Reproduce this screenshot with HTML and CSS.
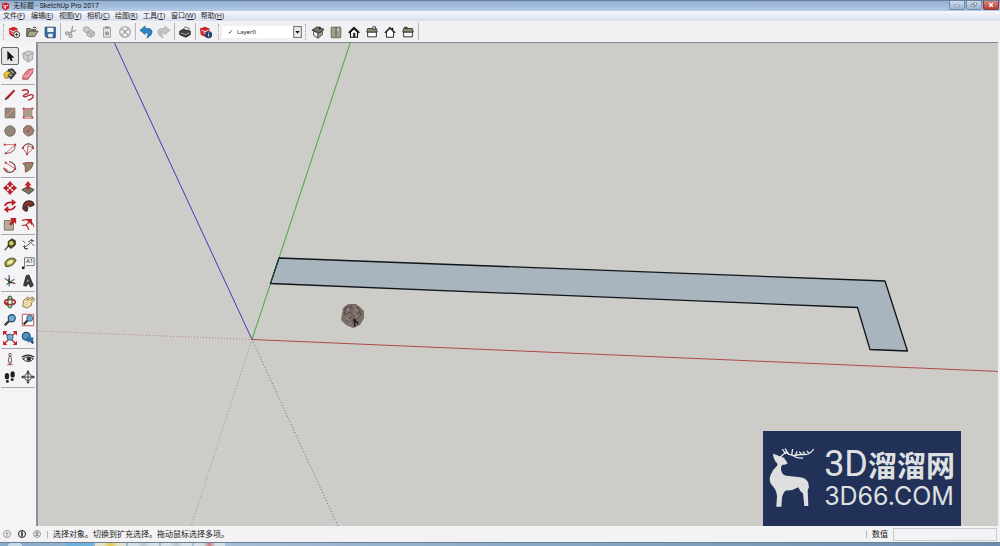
FILE: index.html
```html
<!DOCTYPE html>
<html lang="zh-CN">
<head>
<meta charset="utf-8">
<title>无标题 - SketchUp Pro 2017</title>
<link rel="stylesheet" href="styles.css">
</head>
<body>
<header class="titlebar">
  <svg class="app-icon" viewBox="0 0 10 10"><path fill="#d3222a" d="M1 2 5 .5 9 2v5L5 9.500 1 7z"/><path stroke="#fff" fill="none" d="M2 3.500 5 4.500 8 3.500M3 6l2 1V4.500"/></svg>
  <h1 class="title">无标题 - SketchUp Pro 2017</h1>
  <div class="window-buttons">
    <button class="win" aria-label="最小化"><svg viewBox="0 0 16 8"><path d="M5 4h6v2H5z" fill="#fff" stroke="#56667c" stroke-width=".6"/></svg></button>
    <button class="win" aria-label="还原"><svg viewBox="0 0 16 8"><path d="M7 1.500h4v3H7zM5 3h4v3H5z" fill="#fff" stroke="#56667c" stroke-width=".7"/></svg></button>
    <button class="win close" aria-label="关闭"><svg viewBox="0 0 16 8"><path d="m6 2 4 4m0-4L6 6" stroke="#fff" stroke-width="1.500"/></svg></button>
  </div>
</header>
<nav class="menubar">
  <button>文件(<u>F</u>)</button><button>编辑(<u>E</u>)</button><button>视图(<u>V</u>)</button><button>相机(<u>C</u>)</button><button>绘图(<u>R</u>)</button><button>工具(<u>T</u>)</button><button>窗口(<u>W</u>)</button><button>帮助(<u>H</u>)</button>
</nav>
<div class="toolbar">
  <span class="grip"></span>
  <button class="tool" aria-label="新建"><svg viewBox="0 0 16 16"><path fill="#d3222a" d="m2 4 6-2 4 2v8l-4 2-5-3z"/><path d="m3 6 4 1.500L11 6M5 9l3 1V7.500" fill="none" stroke="#fff"/><circle cx="11" cy="11" r="3.500" fill="#fff" stroke="#222"/><path d="M9 11h4m-2-2v4" stroke="#222"/></svg></button>
  <button class="tool" aria-label="打开"><svg viewBox="0 0 16 16"><path d="M2 13V4h4l1 1h5v3" fill="#8e8c72" stroke="#4a4b3c"/><path d="m2 13 3-6h10l-4 6z" fill="#aaa98d" stroke="#4a4b3c"/><path d="M9 3q3-2 4 1" fill="none" stroke="#333"/></svg></button>
  <button class="tool" aria-label="保存"><svg viewBox="0 0 16 16"><path d="M2.500 2.500h11.500v12h-9.500l-2-2z" fill="#3d719f" stroke="#193f66"/><path d="M5 3h7v5H5zM6 10h5v4H6z" fill="#eef3f7"/></svg></button>
  <span class="sep"></span>
  <button class="tool" aria-label="剪切"><svg viewBox="0 0 16 16" fill="none" stroke="#9a9a9a" stroke-width="1.500"><path d="M10 1 8 10M14 6 5 9"/><circle cx="3.500" cy="9.500" r="1.700"/><circle cx="7.500" cy="12.500" r="1.700"/></svg></button>
  <button class="tool" aria-label="复制"><svg viewBox="0 0 16 16" fill="#ccc" stroke="#999"><path d="m2 3 4-1 3 2v4L5 9 2 7z"/><path d="m6 8 5-2 3 2v4l-4 2-4-2z"/><path d="m6 8 4 2 4-2m-4 2v4"/></svg></button>
  <button class="tool" aria-label="粘贴"><svg viewBox="0 0 16 16" fill="#e4e4e4" stroke="#999"><path d="M4 3h8v11H4z"/><path fill="#999" d="M6 2h4v2H6zM6.500 8h3v3h-3z"/></svg></button>
  <button class="tool" aria-label="删除"><svg viewBox="0 0 16 16" fill="none" stroke="#929292" stroke-width="1.200"><circle cx="8" cy="8" r="6"/><path d="m4.500 4.500 7 7m0-7-7 7"/></svg></button>
  <span class="sep"></span>
  <button class="tool" aria-label="撤销"><svg viewBox="0 0 16 16"><path fill="#2d83bd" stroke="#1b5787" stroke-width=".6" d="m1 6 6-5v3q8-1 8 4 0 4-6 7 3-7-2-6v2z"/></svg></button>
  <button class="tool" aria-label="重做"><svg viewBox="0 0 16 16"><path fill="#c2c2c2" stroke="#a2a2a2" stroke-width=".6" d="M15 6 9 1v3Q1 3 1 8q0 4 6 7-3-7 2-6v2z"/></svg></button>
  <span class="sep"></span>
  <button class="tool" aria-label="打印"><svg viewBox="0 0 16 16"><path d="m5 6 3-4 5 2-2 4z" fill="#eee" stroke="#666"/><path d="m2 7 4-2 8 2v4l-5 3-7-3z" fill="#3f4244" stroke="#222"/><path d="m3 9 6 2 4-2" stroke="#aaa" fill="none"/></svg></button>
  <span class="sep"></span>
  <button class="tool" aria-label="模型信息"><svg viewBox="0 0 16 16"><path fill="#d3222a" d="m1 4 6-2 5 2v8l-4 2-6-3z"/><path d="m3 6 4 1.500L11 6M5 9l3 1V7.500" fill="none" stroke="#fff"/><circle cx="11" cy="11" r="4" fill="#1e416f"/><path d="M11 8.500v1m0 .8v3" stroke="#fff"/></svg></button>
  <span class="grip grip-mid"></span>
  <div class="layer">
    <span class="tick">✓</span>
    <select class="layer-select" aria-label="图层"><option>Layer0</option></select>
    <svg class="layer-arrow" viewBox="0 0 8 11"><path d="M.5.5h7v10h-7z" fill="#e9e9e9" stroke="#777"/><path d="M2 4.500h4L4 7z" fill="#111"/></svg>
  </div>
  <span class="grip grip-mid"></span>
  <button class="tool" aria-label="等轴视图"><svg viewBox="0 0 16 16"><path d="m3 7 5 2v6l-5-3z" fill="#eee" stroke="#444"/><path d="m8 9 5-2v4l-5 4z" fill="#a5a28f" stroke="#444"/><path d="m1 6 6-4 8 3-5 4-3-1-2-1z" fill="#77766a" stroke="#333"/><path d="M10 2v3" stroke="#222" stroke-width="2"/></svg></button>
  <button class="tool" aria-label="俯视图"><svg viewBox="0 0 16 16"><path d="M2.500 2.500h11v12h-11z" fill="#a19e8b" stroke="#64635a"/><path d="M8 2v12" stroke="#555"/><path d="M9.500 4h2v3h-2z" fill="#ccc9b9"/></svg></button>
  <button class="tool" aria-label="前视图"><svg viewBox="0 0 16 16"><path d="M4 8v6h8V8L8 4z" fill="#fff" stroke="#111" stroke-width="1.300"/><path d="m2 9 6-6 6 6" fill="none" stroke="#111" stroke-width="1.800"/><path d="M7 9h2.500v5H7z" fill="#222"/></svg></button>
  <button class="tool" aria-label="右视图"><svg viewBox="0 0 16 16"><path d="M3 8h10v5.500H3z" fill="#fff" stroke="#222"/><path d="M3 4h10l1 4H2z" fill="#8d8a78" stroke="#333"/><path d="M9 2h3v3H9z" fill="#eee" stroke="#333"/></svg></button>
  <button class="tool" aria-label="后视图"><svg viewBox="0 0 16 16"><path d="M4 8v6h8V8L8 4z" fill="#fff" stroke="#111"/><path d="m2 9 6-6 6 6M11 3v3" fill="none" stroke="#111" stroke-width="1.300"/></svg></button>
  <button class="tool" aria-label="左视图"><svg viewBox="0 0 16 16"><path d="M3 8h10v5.500H3z" fill="#fff" stroke="#222"/><path d="M3 4h10l1 4H2zM4 2.500h3V4H4z" fill="#8d8a78" stroke="#333"/></svg></button>
  <span class="sep"></span>
</div>
<main class="workspace">
  <aside class="palette">
    <div class="group">
      <button class="tool active" aria-label="选择"><svg viewBox="0 0 16 16"><path d="M5 2v11l2.500-2.500L9 14l2-1-1.500-3H13z" fill="#111"/></svg></button>
      <button class="tool" aria-label="制作组件"><svg viewBox="0 0 16 16" fill="#cfcfcf" stroke="#9b9b9b"><path d="m2 5 7-3 5 2-1 8-5 3-5-4z"/><path d="m3 5 5 3v6m0-6 6-4" fill="none"/></svg></button>
      <button class="tool" aria-label="材质"><svg viewBox="0 0 16 16"><path d="m6 3 5-1 4 5-6 7-4-4z" fill="#4b4a43" stroke="#222"/><path d="M1 8q2-4 6-3l3 3q-3-1-4 1l-1 4q-4 1-4-5z" fill="#e5c72f" stroke="#67571b" stroke-width=".7"/><path d="m9 4 3 3m-5 3 3-1" stroke="#fff"/></svg></button>
      <button class="tool" aria-label="擦除"><svg viewBox="0 0 16 16"><path d="m2 10 6-7 6-1-1 5-5 7H2z" fill="#e58390" stroke="#aa4b5a"/><path d="m2 10 6 .5 6-8" fill="none" stroke="#f7bdc5"/></svg></button>
    </div>
    <div class="group">
      <button class="tool" aria-label="直线"><svg viewBox="0 0 16 16"><path d="m2 14 2-4 8-8 2 1-8 9z" fill="#981e22"/><path d="m2 14 1-3 2 1z" fill="#222"/><path d="m5 10 7-7" stroke="#d34d4d"/></svg></button>
      <button class="tool" aria-label="手绘线"><svg viewBox="0 0 16 16"><path d="M1 3q5-2 7 0 2 3-3 4-5 3 0 3l5-2q4-1 4 1 0 3-6 5" fill="none" stroke="#ac292e" stroke-width="1.500"/></svg></button>
      <button class="tool" aria-label="矩形"><svg viewBox="0 0 16 16"><path d="M2.500 2.500h11v11h-11z" fill="#918776" stroke="#756e62"/><path d="M3 13 13 3" stroke="#ee8d84" stroke-width="1.500"/></svg></button>
      <button class="tool" aria-label="旋转矩形"><svg viewBox="0 0 16 16"><path d="M3 3h10v10H3z" fill="#ab9c8b"/><path d="M2 3h12M3 2v12h11" fill="none" stroke="#d76665"/><path d="M2 2h2v2H2zm10 0h2v2h-2zM2 12h2v2H2zm10 0h2v2h-2z" fill="#b73638"/></svg></button>
      <button class="tool" aria-label="圆"><svg viewBox="0 0 16 16"><circle cx="8" cy="8" r="6" fill="#918776" stroke="#6e695e"/><path d="M8 8h5" stroke="#d4726a"/></svg></button>
      <button class="tool" aria-label="多边形"><svg viewBox="0 0 16 16"><path d="m6 2 5 0 4 5-2 5-5 2-5-4V5z" fill="#9b8170" stroke="#7a6659"/><path d="m8 8 4-4" stroke="#cd4f4f"/><circle cx="8" cy="8" r="1" fill="#b82f32"/></svg></button>
      <button class="tool" aria-label="圆弧"><svg viewBox="0 0 16 16" fill="none" stroke="#c56565"><path d="M2 3h12L3 13"/><path d="M14 3q0 10-11 10" stroke="#754141"/><path d="M1 2h2v2H1zm12 0h2v2h-2zM2 12h2v2H2z" fill="#b92a31" stroke="none"/></svg></button>
      <button class="tool" aria-label="两点圆弧"><svg viewBox="0 0 16 16" fill="none" stroke="#b94c4c"><path d="M2 7q2-5 7-5 5 1 5 5" stroke="#743c3c" stroke-width="1.300"/><path d="m2 7 5 7 7-7M7 14 8 4l6 3"/><path d="M1 6h2v2H1zm12 0h2v2h-2zM6 13h2v2H6z" fill="#b92a31" stroke="none"/></svg></button>
      <button class="tool" aria-label="三点圆弧"><svg viewBox="0 0 16 16" fill="none" stroke="#743c3c"><path d="M7 2q7 1 7 7-2 6-8 5-4-1-5-5" stroke-width="1.300"/><path d="m3 3 11 7M1 9l5 3" stroke="#c74949"/><path d="M2 2h2v2H2zm11 7h2v2h-2z" fill="#b92a31" stroke="none"/></svg></button>
      <button class="tool" aria-label="扇形"><svg viewBox="0 0 16 16"><path d="M2 4q6-2 12-1-1 8-9 11V8Q4 5 2 4z" fill="#94806c" stroke="#6b5a4d"/><path d="M2 4 12 3M5 13V8" stroke="#c85353"/></svg></button>
    </div>
    <div class="group">
      <button class="tool" aria-label="移动"><svg viewBox="0 0 16 16" fill="#bd2228"><path d="m8 0 4 4.500H9.500v2h-3v-2H4zm0 16 4-4.500H9.500v-2h-3v2H4zM0 8l4.500-4v2.500h2v3h-2V12zm16 0-4.500-4v2.500h-2v3h2V12z"/></svg></button>
      <button class="tool" aria-label="推拉"><svg viewBox="0 0 16 16"><path d="m1 10 7-4 7 4-6 5z" fill="#797861" stroke="#49483b"/><path d="m8 0 4 5H9.500v5h-3V5H4z" fill="#c3242b"/></svg></button>
      <button class="tool" aria-label="旋转"><svg viewBox="0 0 16 16" fill="none" stroke="#b82027" stroke-width="2"><path d="M2 8q2-5 9-4m3 4q-2 5-9 4"/><path d="m10 0 5 4-5 4zM6 8l-5 4 5 4z" fill="#b82027" stroke="none"/></svg></button>
      <button class="tool" aria-label="路径跟随"><svg viewBox="0 0 16 16"><path d="M2 11Q2 2 9 2q6 0 6 5l-5 2-2-2q-2 1 0 3l-1 4q-4 0-5-3z" fill="#632e2a" stroke="#3d2521"/><path d="M4 8q2-4 8-3" stroke="#c23b3b" fill="none"/></svg></button>
      <button class="tool" aria-label="缩放"><svg viewBox="0 0 16 16"><path d="M1.500 4h10.500v11H1.500z" fill="#b5ad9a" stroke="#716b5e"/><path d="M8 1h7v7l-2-2-4 4-2-2 3-4z" fill="#bd2228"/></svg></button>
      <button class="tool" aria-label="偏移"><svg viewBox="0 0 16 16" fill="none" stroke="#b52a30" stroke-width="1.300"><path d="M1 4q9-4 14 7M1 10q6-3 8 5"/><path d="m5 10 6-6"/><path d="M7 3h5v5z" fill="#b52a30"/></svg></button>
    </div>
    <div class="group">
      <button class="tool" aria-label="卷尺"><svg viewBox="0 0 16 16"><path d="m2 14 5-6" stroke="#555" stroke-width="1.500"/><path d="m6 4 4-3 4 2v5l-5 4-3-3z" fill="#504c2b" stroke="#222"/><circle cx="9.500" cy="6" r="2.500" fill="#d9ce48"/></svg></button>
      <button class="tool" aria-label="尺寸"><svg viewBox="0 0 16 16" fill="none" stroke="#444"><path d="m2 3 3 3m3-1 5-4M2 9l5 5m5-8 3 3M4 11l10-8m-3 0 4 0M4 8v4h4"/></svg></button>
      <button class="tool" aria-label="量角器"><svg viewBox="0 0 16 16"><path d="M3 12Q0 6 7 3q6-2 8 2-4 8-12 7z" fill="#9c973e" stroke="#444428"/><path d="M5 10q-1-3 2-5 4-1 5 1-2 4-7 4z" fill="#ede9a0"/></svg></button>
      <button class="tool text-tool" aria-label="文字"><svg viewBox="0 0 16 16" fill="none" stroke="#666"><path d="M4 2h11v9H6M4 2v9m-2 3 3-3"/><path d="M1 12h3v3H1z" fill="#222" stroke="none"/></svg><span>A1</span></button>
      <button class="tool" aria-label="轴"><svg viewBox="0 0 16 16" fill="none" stroke-width="1.300"><path d="M7 1v13" stroke="#3c5b9c"/><path d="m2 5 6 4 6 2" stroke="#883a3a"/><path d="m4 12 9-6" stroke="#3a8053"/><path d="M7 5v5h3" stroke="#222"/></svg></button>
      <button class="tool" aria-label="三维文字"><svg viewBox="0 0 16 16"><path d="m3 13 3-11 3-1 5 12-3 2-2-4-2 1-1 2z" fill="#404345" stroke="#252728"/><path d="m7.500 6-1 3 2.500-1z" fill="#aaa"/></svg></button>
    </div>
    <div class="group">
      <button class="tool" aria-label="环绕观察"><svg viewBox="0 0 16 16" fill="none"><ellipse cx="8" cy="8" rx="6" ry="3" stroke="#b62b31" stroke-width="2"/><ellipse cx="8" cy="8" rx="2.500" ry="6.500" stroke="#347847" stroke-width="1.600"/><path d="m1 9 5-1-1 5z" fill="#b62b31"/></svg></button>
      <button class="tool" aria-label="平移"><svg viewBox="0 0 16 16"><path d="m2 13 1-7 5-4 1 1-2 3 6-4 1 1-3 3 4-2v2l-3 3v3l-5 3z" fill="#ecd9a6" stroke="#8b7752"/></svg></button>
      <button class="tool" aria-label="缩放视图"><svg viewBox="0 0 16 16"><path d="m2 14 5-5" stroke="#3a3432" stroke-width="2.500"/><circle cx="10" cy="6" r="4" fill="#75acd0" stroke="#28577a" stroke-width="1.500"/></svg></button>
      <button class="tool" aria-label="缩放窗口"><svg viewBox="0 0 16 16"><path d="M1.500 1.500h13v13h-13z" fill="#fff" stroke="#ba4146"/><path d="m3 13 5-5" stroke="#333" stroke-width="2.500"/><circle cx="10" cy="6" r="3.500" fill="#75acd0" stroke="#28577a"/></svg></button>
      <button class="tool" aria-label="充满视窗"><svg viewBox="0 0 16 16"><path d="m2 2 12 12m0-12L2 14" stroke="#bd272e" stroke-width="1.500"/><path d="M0 0h5L0 5zm16 0v5l-5-5zM0 16v-5l5 5zm16 0h-5l5-5z" fill="#bd272e"/><circle cx="8" cy="7" r="3.500" fill="#75acd0" stroke="#28577a"/></svg></button>
      <button class="tool" aria-label="上一视图"><svg viewBox="0 0 16 16"><path d="m9 9 5 5" stroke="#263e58" stroke-width="2.500"/><circle cx="6" cy="6" r="4.500" fill="#5795c1" stroke="#204d73" stroke-width="1.300"/><path d="m5 9 4-4v2h5v5H9v2z" fill="#2d72a5"/></svg></button>
    </div>
    <div class="group">
      <button class="tool" aria-label="定位相机"><svg viewBox="0 0 16 16" fill="#f5eeee" stroke="#64494a"><path d="M7 5h2l1 6H9v3H7v-3H6z"/><circle cx="8" cy="3" r="1.500"/><path d="M5 14.500h6" stroke="#c63c40"/></svg></button>
      <button class="tool" aria-label="绕轴观察"><svg viewBox="0 0 16 16"><path d="M2 8q6-5 12 0-5 6-12 0z" fill="#ddd" stroke="#222"/><circle cx="9" cy="8" r="2.300" fill="#222"/><path d="M1 6q7-5 14 0" stroke="#222" stroke-width="1.500" fill="none"/></svg></button>
      <button class="tool" aria-label="漫游"><svg viewBox="0 0 16 16" fill="#222"><ellipse cx="4.500" cy="7" rx="2.500" ry="3.700"/><ellipse cx="5" cy="13" rx="1.700" ry="1.700"/><ellipse cx="11" cy="5" rx="2.500" ry="3.700"/><ellipse cx="10.500" cy="11" rx="1.700" ry="1.700"/></svg></button>
      <button class="tool" aria-label="剖切面"><svg viewBox="0 0 16 16" fill="none" stroke="#333"><circle cx="8" cy="8" r="4"/><path d="M1 8h14M8 2v12"/><path d="m8 0 2 3H6zm0 16 2-3H6zM0 8l3-2v4zm16 0-3-2v4z" fill="#333" stroke="none"/></svg></button>
    </div>
  </aside>
  <section class="canvas" aria-label="模型视图">
    <svg class="scene" viewBox="38 43 960 483" preserveAspectRatio="xMinYMin slice" fill="none">
      <path d="M252 339.500 38 331" stroke="#b68484" stroke-dasharray="1 2"/>
      <path d="M252 339.500 191 526" stroke="#6fae82" stroke-dasharray="1 2"/>
      <path d="M252 339.500 338 526" stroke="#6666ad" stroke-dasharray="1 2"/>
      <path d="M252 339.500 114 42" stroke="#3c3cb8"/>
      <path d="M252 339.500 350.500 42" stroke="#3fab43"/>
      <path d="M252 339.500 1000 371.500" stroke="#b2484c"/>
      <path d="m279 258 606 23 22.500 70-37.500-1.500-12.500-42L270.500 283.500z" fill="#a8b5be" stroke="#101418" stroke-width="1.300" stroke-linejoin="round"/>
      <path d="M279 258l-8.500 25.500" stroke="#1b4a2b"/>
      <path d="m343 308 5-4h8l4 3 4 4v7l-4 7-7 3-7-3-5-5z" fill="#7b6d68"/>
      <path d="m344 310 5-4 4 3 6-2m-15 8 6-3 4 4 8-5m-16 10 5-4 5 3 6-6m-13 9 4-2 6 1m-13-16-2 9m8-11-2 8m8-5 3 8" stroke="#5a4d49"/>
      <path d="m347 309 3 2m4-3 4 3m-12 7 3 2m5-7 4 4m-9 7 3-2" stroke="#a79b93"/>
      <path d="m354 319 1 8m-1-8 4 5" stroke="#171313" stroke-width="1.300"/>
    </svg>
    <div class="brand">
      <svg class="deer" viewBox="0 0 162 204"><path fill="#dedfdf" d="M24 32q10 2 18 7l15 5 11 17q-7 6-16 4-7 8-2 22 3 9 15 11l40 5q17 2 24 14l3 15-4 10 2 47h-12l-4-38q-10-6-14-18-18 11-36 9-11 7-13 24l-2 25H34l2-31q-1-18-13-31-14-15-6-34 4-13 18-25 5-4 1-10-10-8-12-26z"/><g fill="none" stroke="#e5e6e6" stroke-width="4"><path d="M46 42 62 28q16 13 34 8l16-2q20 5 34-16M62 33 52 18M72 35 60 17m20 19 3-18m9 19 4-12m18 11-12-10m20 10-8-10m18 6-6-8M80 36q15 11 34 9"/></g></svg>
      <div class="brand-text">
        <div class="brand-name"><span class="brand-latin">3D</span><span class="brand-cjk">溜溜网</span></div>
        <div class="brand-site">3D66.COM</div>
      </div>
    </div>
  </section>
</main>
<footer class="statusbar">
  <svg class="status-icon" viewBox="0 0 10 10" fill="none" stroke="#999"><circle cx="5" cy="5" r="3.500"/><path d="M5 7.500v-4M3.500 5 5 3.500 6.500 5"/></svg>
  <svg class="status-icon" viewBox="0 0 10 10" fill="none" stroke="#222"><circle cx="5" cy="5" r="3.500"/><path d="M5 2.500v5" stroke-width="1.500"/></svg>
  <svg class="status-icon" viewBox="0 0 10 10" fill="none" stroke="#999"><circle cx="5" cy="5" r="3.500"/><path d="M3 7q2-3 4 0M4 3h2v2H4z" fill="#999"/></svg>
  <span class="status-sep"></span>
  <p class="hint">选择对象。切换到扩充选择。拖动鼠标选择多项。</p>
  <span class="status-sep"></span>
  <label class="value-label" for="value">数值</label>
  <input class="value" id="value" type="text">
</footer>
<div class="taskbar"><span class="orb"></span><span class="task blue"></span><span class="task yellow"></span><span class="task"></span><span class="task"></span><span class="task red"></span></div>
</body>
</html>
```
FILE: styles.css
```css
* { box-sizing: border-box; }
body {
  margin: 0;
  height: 100vh;
  display: flex;
  flex-direction: column;
  overflow: hidden;
  background: #f1f0f2;
  color: #1c1c22;
  font-family: "Noto Sans", "Noto Sans CJK SC", sans-serif;
  font-size: 7px;
}
button {
  margin: 0;
  padding: 0;
  border: 0;
  background: none;
  color: inherit;
  font: inherit;
}
svg { display: block; }

.titlebar {
  flex: none;
  height: 11px;
  display: flex;
  align-items: center;
  gap: 3px;
  padding-left: 1px;
  border-top: 1px solid #66809b;
  background: linear-gradient(#93afd2, #b6cce7);
}
.app-icon { width: 9px; height: 9px; }
.title {
  flex: 1;
  margin: 0;
  font-family: Roboto, "Noto Sans CJK SC", sans-serif;
  font-size: 7px;
  line-height: 10px;
  font-weight: 400;
}
.window-buttons {
  display: flex;
  align-self: flex-start;
  gap: 1px;
  padding-right: 1px;
}
.win {
  width: 16px;
  height: 9px;
  border: 1px solid #7389a6;
  border-top: 0;
  border-radius: 0 0 2px 2px;
  background: linear-gradient(#cddbec, #9eb6d3);
}
.win svg { width: 100%; height: 100%; }
.close { background: linear-gradient(#d98a82, #b93f35); border-color: #7c3c42; }

.menubar {
  flex: none;
  height: 10px;
  display: flex;
  gap: 5px;
  padding-left: 3px;
  background: linear-gradient(#f5f7fc, #d9deee);
  line-height: 10px;
}
.menubar button { min-width: 23px; text-align: left; white-space: nowrap; }

.toolbar {
  flex: none;
  height: 21px;
  display: flex;
  align-items: center;
  padding-left: 2px;
  background: #f1f0f2;
}
.tool {
  flex: none;
  width: 18px;
  height: 18px;
  padding: 2px;
  display: flex;
  align-items: center;
  justify-content: center;
}
.tool svg { width: 14px; height: 14px; }
.sep { width: 1px; height: 17px; margin: 0 1px; background: #b5b5b8; }
.grip { width: 1px; height: 16px; margin: 0 1px; border-left: 1px dotted #a5a5a8; }
.grip-mid { margin: 0 3px; }
.layer {
  position: relative;
  display: flex;
  align-items: center;
  width: 80px;
  height: 12px;
  padding-left: 6px;
  background: #fff;
  line-height: 12px;
}
.tick { font-size: 6px; font-family: "DejaVu Sans", sans-serif; }
.layer-select {
  flex: 1;
  min-width: 0;
  height: 12px;
  padding: 0 0 0 4px;
  border: 0;
  appearance: none;
  background: transparent;
  color: #222;
  font-family: inherit;
  font-size: 6px;
}
.layer-arrow {
  position: absolute;
  top: 0;
  right: 0;
  width: 9px;
  height: 12px;
  pointer-events: none;
}

.workspace { flex: 1; min-height: 0; display: flex; }
.palette {
  flex: none;
  width: 38px;
  padding: 5px 1px 0;
  border-right: 2px solid #8d8f92;
  background: #f4f3f6;
}
.group {
  display: grid;
  grid-template-columns: 18px 18px;
  padding-bottom: 1px;
  margin-bottom: 1px;
  border-bottom: 1px solid #a9a9ad;
}
.active { border: 1px solid #696969; border-radius: 2px; background: #e6e6e8; padding: 1px; }
.text-tool { position: relative; }
.text-tool span { position: absolute; left: 7px; top: 3px; font-size: 6px; line-height: 8px; }
.canvas {
  position: relative;
  flex: 1;
  min-width: 0;
  margin-right: 2px;
  border-top: 1px solid #85878a;
  background: #cdccc8;
  overflow: hidden;
}
.scene { width: 100%; height: 100%; }
.brand {
  position: absolute;
  right: 37px;
  bottom: 0;
  display: flex;
  align-items: center;
  gap: 5px;
  padding: 12px 6px 15px 2px;
  background: #223158;
  color: #dfe0e1;
}
.deer { width: 54px; height: 68px; }
.brand-text { display: flex; flex-direction: column; gap: 6px; }
.brand-name { display: flex; align-items: center; height: 32px; }
.brand-latin { font: 400 36px/32px Roboto, sans-serif; }
.brand-cjk { font: 700 29px/32px "Noto Sans CJK SC", sans-serif; }
.brand-site { font: 400 25px/20px Inter, sans-serif; }

.statusbar {
  flex: none;
  height: 16px;
  display: flex;
  align-items: center;
  gap: 5px;
  padding: 0 3px 0 2px;
  background: #f3f2f4;
  font-size: 8px;
  line-height: 14px;
}
.status-icon { width: 10px; height: 10px; }
.status-sep { width: 1px; height: 7px; background: #b5b5b8; }
.hint { flex: 1; margin: 0; }
.value {
  width: 104px;
  height: 13px;
  padding: 0 3px;
  border: 1px solid #c9cbd0;
  background: #f3f2f4;
  font: inherit;
}
.taskbar {
  flex: none;
  height: 4px;
  display: flex;
  gap: 2px;
  padding-left: 8px;
  border-top: 1px solid #6d8093;
  background: linear-gradient(90deg, #86a9cc, #a9c0d8 20%, #8ba9c9 50%, #6c8cb0);
}
.orb { width: 14px; margin-right: 42px; background: #c5d8e8; border-radius: 7px 7px 0 0; }
.task { width: 31px; background: linear-gradient(90deg, #d5dfe8 30%, #b9c4cc 50%, #d5dfe8 70%); }
.blue { width: 27px; background: #6db2dc; }
.yellow { background: linear-gradient(90deg, #e2e2ca 25%, #e5c74b 50%, #e2e2ca 75%); }
.red { background: linear-gradient(90deg, #d5dfe8 30%, #c97c7c 50%, #d5dfe8 70%); }
```
